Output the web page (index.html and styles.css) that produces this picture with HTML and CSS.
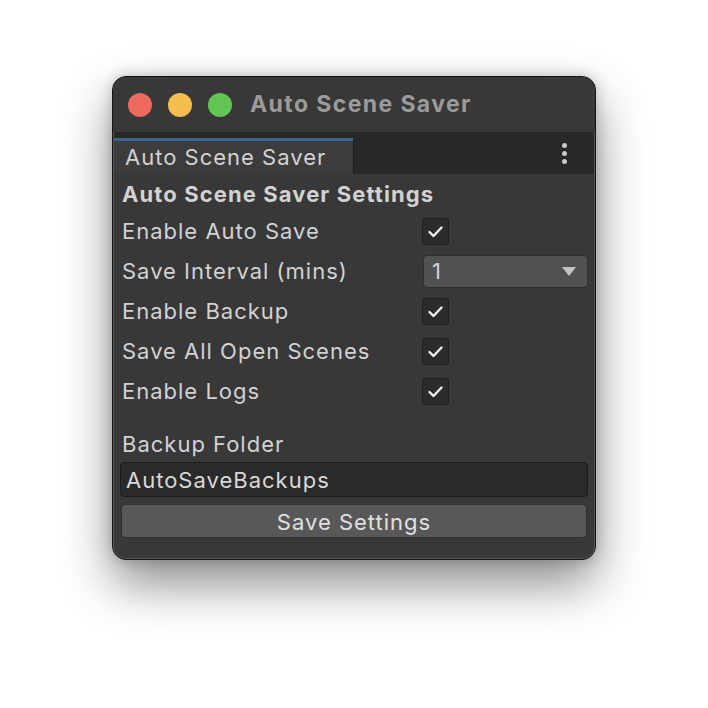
FILE: index.html
```html
<!DOCTYPE html>
<html>
<head>
<meta charset="utf-8">
<link rel="stylesheet" href="styles.css">
</head>
<body>
<div class="window">
  <div class="titlebar">
    <div class="lights">
      <span class="light red"></span>
      <span class="light yellow"></span>
      <span class="light green"></span>
    </div>
    <div class="title">Auto Scene Saver</div>
  </div>
  <div class="tabbar">
    <div class="tab">Auto Scene Saver</div>
    <div class="menu">
      <span class="dot"></span><span class="dot"></span><span class="dot"></span>
    </div>
  </div>
  <div class="content">
    <div class="heading">Auto Scene Saver Settings</div>
    <div class="row">
      <div class="label">Enable Auto Save</div>
      <div class="check"><svg viewBox="0 0 27 27" width="27" height="27"><path d="M7.5 14 L11.5 18 L19.5 9.5" fill="none" stroke="#f0f0f0" stroke-width="2.4" stroke-linecap="round" stroke-linejoin="round"/></svg></div>
    </div>
    <div class="row">
      <div class="label">Save Interval (mins)</div>
      <div class="dropdown">
        <span class="value">1</span>
        <svg class="arrow" viewBox="0 0 14 9" width="14" height="9"><path d="M0 0 L14 0 L7 9 Z" fill="#c4c4c4"/></svg>
      </div>
    </div>
    <div class="row">
      <div class="label">Enable Backup</div>
      <div class="check"><svg viewBox="0 0 27 27" width="27" height="27"><path d="M7.5 14 L11.5 18 L19.5 9.5" fill="none" stroke="#f0f0f0" stroke-width="2.4" stroke-linecap="round" stroke-linejoin="round"/></svg></div>
    </div>
    <div class="row">
      <div class="label">Save All Open Scenes</div>
      <div class="check"><svg viewBox="0 0 27 27" width="27" height="27"><path d="M7.5 14 L11.5 18 L19.5 9.5" fill="none" stroke="#f0f0f0" stroke-width="2.4" stroke-linecap="round" stroke-linejoin="round"/></svg></div>
    </div>
    <div class="row">
      <div class="label">Enable Logs</div>
      <div class="check"><svg viewBox="0 0 27 27" width="27" height="27"><path d="M7.5 14 L11.5 18 L19.5 9.5" fill="none" stroke="#f0f0f0" stroke-width="2.4" stroke-linecap="round" stroke-linejoin="round"/></svg></div>
    </div>
    <div class="folder-label">Backup Folder</div>
    <div class="field">AutoSaveBackups</div>
    <div class="button">Save Settings</div>
  </div>
</div>
</body>
</html>
```

FILE: styles.css
```css
html, body {
  margin: 0;
  padding: 0;
  background: #ffffff;
}
body {
  width: 708px;
  height: 708px;
  font-family: Inter, "Noto Sans", sans-serif;
  color: #d2d2d2;
}
.window {
  margin: 76px 0 0 112px;
  width: 484px;
  height: 484px;
  box-sizing: border-box;
  border: 1px solid #141414;
  border-radius: 14px;
  background: #383838;
  box-shadow: inset 0 0 0 1px #555555, 0 24px 50px rgba(0,0,0,0.45), 0 0 14px rgba(0,0,0,0.2);
  overflow: hidden;
  display: flex;
  flex-direction: column;
}
.titlebar {
  height: 55px;
  display: flex;
  align-items: center;
  background: #383838;
}
.lights {
  display: flex;
  gap: 16px;
  margin-left: 15px;
}
.light {
  width: 24px;
  height: 24px;
  border-radius: 50%;
  display: block;
}
.red { background: #ec6a5e; }
.yellow { background: #f4bf4f; }
.green { background: #61c554; }
.title {
  margin-left: 18px;
  font-weight: 700;
  font-size: 23px;
  letter-spacing: 1.4px;
  color: #9b9b9b;
  padding-bottom: 2px;
}
.tabbar {
  height: 42px;
  background: #282828;
  display: flex;
  align-items: flex-end;
  justify-content: space-between;
  border-left: 1px solid #555555;
  border-right: 1px solid #555555;
}
.tab {
  width: 240px;
  height: 36px;
  box-sizing: border-box;
  background: #3c3c3c;
  border-top: 3px solid #3c6290;
  border-right: 1px solid #1f1f1f;
  border-top-right-radius: 2px;
  font-size: 22px;
  letter-spacing: 1px;
  line-height: 33px;
  padding-left: 11px;
  color: #d2d2d2;
}
.menu {
  align-self: center;
  display: flex;
  flex-direction: column;
  gap: 3px;
  margin-right: 27px;
}
.dot {
  width: 5px;
  height: 5px;
  border-radius: 50%;
  background: #c8c8c8;
  display: block;
}
.content {
  flex: 1;
  display: flex;
  flex-direction: column;
  padding: 1px 6px 0 6px;
  border-left: 1px solid #555555;
  border-right: 1px solid #555555;
}
.heading {
  height: 36px;
  line-height: 38px;
  padding-left: 2px;
  font-weight: 700;
  font-size: 22px;
  letter-spacing: 1.1px;
  color: #d2d2d2;
}
.row {
  height: 40px;
  display: flex;
  align-items: center;
}
.label {
  width: 300px;
  padding-left: 2px;
  font-size: 22px;
  letter-spacing: 1px;
}
.check {
  width: 27px;
  height: 27px;
  box-sizing: border-box;
  background: #2b2b2b;
  border: 1px solid #1f1f1f;
  border-radius: 3px;
  display: flex;
}
.check svg {
  margin: -1px;
}
.dropdown {
  margin-left: 1px;
  width: 165px;
  height: 33px;
  box-sizing: border-box;
  background: #515151;
  border: 1px solid #2f2f2f;
  border-radius: 4px;
  display: flex;
  align-items: center;
  justify-content: space-between;
  padding: 0 11px 0 8px;
  font-size: 22px;
}
.folder-label {
  margin-top: 16px;
  height: 34px;
  line-height: 34px;
  padding-left: 2px;
  font-size: 22px;
  letter-spacing: 1px;
}
.field {
  margin-top: 1px;
  height: 35px;
  box-sizing: border-box;
  background: #2a2a2a;
  border: 1px solid #1c1c1c;
  border-radius: 4px;
  font-size: 22px;
  letter-spacing: 1px;
  line-height: 35px;
  padding-left: 5px;
  color: #d8d8d8;
}
.button {
  margin: 7px 1px 0 1px;
  height: 34px;
  box-sizing: border-box;
  background: #585858;
  border: 1px solid #2f2f2f;
  border-radius: 4px;
  font-size: 22px;
  letter-spacing: 1px;
  line-height: 34px;
  text-align: center;
  color: #e0e0e0;
}
```
